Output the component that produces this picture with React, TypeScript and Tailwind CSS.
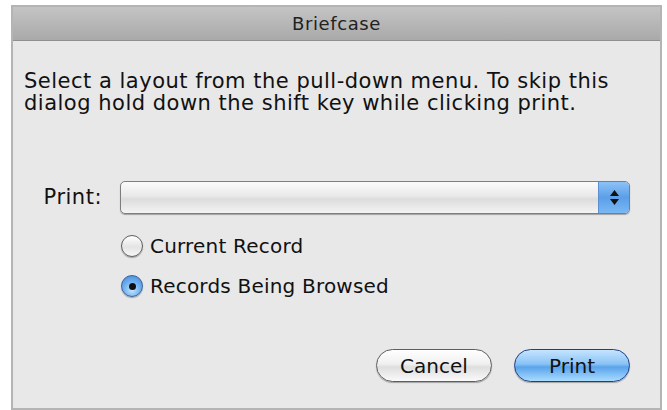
import React from 'react';

// Small glossy radio knob drawn with CSS gradients
const Radio: React.FC<{ checked?: boolean }> = ({ checked }) =>
  checked ? (
    <span className="flex h-[22px] w-[22px] items-center justify-center rounded-full border border-[#3a5f9e] bg-[radial-gradient(circle_at_50%_70%,#c4e6ff_0%,#74b4f0_45%,#3d86d8_100%)] shadow-[0_1px_1px_rgba(0,0,0,0.3)]">
      <span className="h-[7px] w-[7px] rounded-full bg-[#111]" />
    </span>
  ) : (
    <span className="h-[22px] w-[22px] rounded-full border border-[#5f5f5f] bg-[linear-gradient(#ffffff,#e4e4e4_55%,#f7f7f7)] shadow-[0_1px_1px_rgba(0,0,0,0.3)]" />
  );

const App: React.FC = () => {
  return (
    <div className="h-[410px] w-[667px] bg-white pl-[11px] pr-[5px] pt-[5px] font-['DejaVu_Sans',sans-serif] text-[#111]">
      <div className="flex h-[405px] flex-col border-2 border-b-0 border-[#b4b4b4]">
        {/* title bar */}
        <div className="flex h-[34px] items-center justify-center border-b border-[#8f8f8f] bg-[linear-gradient(#c4c4c4,#a9a9a9)] text-[18px] tracking-[0.6px] text-[#222]">
          Briefcase
        </div>

        <div className="flex flex-1 flex-col border-b-2 border-[#b4b4b4] bg-[#e8e8e8] px-[11px] text-[21px] tracking-[0.5px]">
          <p className="mt-[29px] leading-[22px]">
            Select a layout from the pull-down menu. To skip this
            <br />
            dialog hold down the shift key while clicking print.
          </p>

          <div className="mt-[67px] flex items-center gap-[18px]">
            <span className="w-[78px] text-right">Print:</span>
            <div className="mr-[19px] flex h-[33px] flex-1 overflow-hidden rounded-[5px] border border-[#7d7d7d] bg-[linear-gradient(#fbfbfb,#e9e9e9_45%,#dcdcdc_55%,#f4f4f4)] shadow-[0_1px_1px_rgba(0,0,0,0.3)]">
              <div className="flex-1" />
              <div className="flex w-[31px] flex-col items-center justify-center gap-[3px] border-l border-[#5b8fd0] bg-[linear-gradient(#8cc2f6,#5b9fe8_50%,#7ab8f4)]">
                <svg width="9" height="6" viewBox="0 0 9 6"><path d="M4.5 0L9 6H0z" fill="#111" /></svg>
                <svg width="9" height="6" viewBox="0 0 9 6"><path d="M0 0h9L4.5 6z" fill="#111" /></svg>
              </div>
            </div>
          </div>

          <div className="ml-[97px] mt-[20px] flex flex-col gap-[16px] text-[20px] leading-[24px] tracking-[0.2px]">
            <label className="flex items-center gap-[7px]">
              <Radio />
              Current Record
            </label>
            <label className="flex items-center gap-[7px]">
              <Radio checked />
              Records Being Browsed
            </label>
          </div>

          <div className="mb-[26px] mt-auto flex justify-end gap-[22px] pr-[19px] text-[20px] tracking-normal">
            <button className="h-[33px] w-[116px] rounded-full border border-[#5e5e5e] bg-[linear-gradient(#ffffff,#f0f0f0_45%,#dedede_55%,#fafafa)] shadow-[0_1px_1px_rgba(0,0,0,0.3)]">
              Cancel
            </button>
            <button className="h-[33px] w-[116px] rounded-full border border-[#1f3f8a] bg-[linear-gradient(#c5e4ff,#8ac3f5_45%,#5aa3ec_55%,#a8dcff)] shadow-[0_1px_1px_rgba(0,0,0,0.3)]">
              Print
            </button>
          </div>
        </div>
      </div>
    </div>
  );
};

export default App;
